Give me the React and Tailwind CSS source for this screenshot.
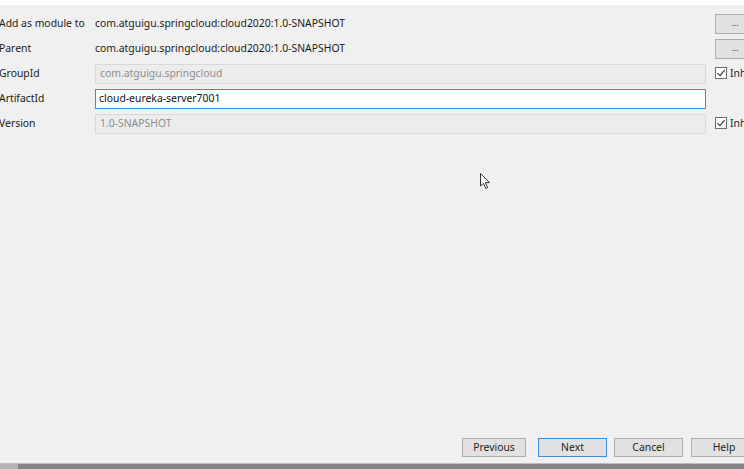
import React from "react";

const font = { fontFamily: '"Noto Sans", "Liberation Sans", sans-serif' };

function Check() {
  return (
    <div className="flex items-center gap-[3px]">
      <div className="w-[12px] h-[12px] border border-[#6d6d6d] bg-white flex items-center justify-center">
        <svg width="10" height="10" viewBox="0 0 10 10">
          <path d="M1.5 5.2 L4 7.6 L8.6 2.2" fill="none" stroke="#333" strokeWidth="1.1" />
        </svg>
      </div>
      <span className="text-[10.4px] text-[#222]">Inherit</span>
    </div>
  );
}

function DotsButton() {
  return (
    <div className="w-[40px] h-[20px] border border-[#adadad] bg-[#e1e1e1] flex items-center justify-center text-[9px] text-[#333] leading-none pb-[2px]">
      ...
    </div>
  );
}

export default function App() {
  const rows = [
    { label: "Add as module to", value: "com.atguigu.springcloud:cloud2020:1.0-SNAPSHOT", kind: "text", right: "dots" },
    { label: "Parent", value: "com.atguigu.springcloud:cloud2020:1.0-SNAPSHOT", kind: "text", right: "dots" },
    { label: "GroupId", value: "com.atguigu.springcloud", kind: "disabled", right: "check" },
    { label: "ArtifactId", value: "cloud-eureka-server7001", kind: "active", right: null },
    { label: "Version", value: "1.0-SNAPSHOT", kind: "disabled", right: "check" },
  ];

  const buttons = [
    { name: "Previous", cls: "w-[64px] border-[#adadad]" },
    { name: "Next", cls: "w-[69px] ml-[12px] border-[#3c8fd6]" },
    { name: "Cancel", cls: "w-[69px] ml-[7px] border-[#adadad]" },
    { name: "Help", cls: "w-[66px] ml-[8px] border-[#adadad]" },
  ];

  return (
    <div className="w-[744px] h-[469px] bg-[#f0f0f0] relative overflow-hidden flex flex-col" style={font}>
      <div className="h-[5px] bg-white" />

      {/* Form rows */}
      <div className="flex flex-col pt-[6px]">
        {rows.map((r) => (
          <div key={r.label} className="flex items-center h-[25px]">
            <div className="w-[96px] -ml-[1px] shrink-0 text-[10.4px] text-[#1a1a1a]">{r.label}</div>
            <div className="w-[611px] shrink-0">
              {r.kind === "text" && <div className="text-[10.4px] text-[#1a1a1a]">{r.value}</div>}
              {r.kind === "disabled" && (
                <div className="h-[20px] border border-[#d9d9d9] bg-[#ececec] px-[4px] flex items-center text-[10.4px] text-[#8c8c8c]">
                  {r.value}
                </div>
              )}
              {r.kind === "active" && (
                <div className="h-[20px] border border-[#3c8fd6] bg-white px-[3px] flex items-center text-[10.4px] text-[#111]">
                  {r.value}
                </div>
              )}
            </div>
            <div className="ml-[9px] shrink-0">
              {r.right === "dots" && <DotsButton />}
              {r.right === "check" && <Check />}
            </div>
          </div>
        ))}
      </div>

      <div className="flex-1" />

      {/* Bottom buttons */}
      <div className="flex items-center pl-[462px] pb-[6px]">
        {buttons.map((b) => (
          <div
            key={b.name}
            className={`h-[19px] shrink-0 flex items-center justify-center text-[10.4px] text-[#222] bg-[#e1e1e1] border ${b.cls}`}
          >
            {b.name}
          </div>
        ))}
      </div>

      <div className="h-[1px] bg-[#bdbdbd]" />
      <div className="h-[5px] flex">
        <div className="w-[18px] bg-[#b4b4b4]" />
        <div className="flex-1 bg-[#858585]" />
      </div>

      {/* mouse cursor */}
      <svg className="absolute left-[480px] top-[173px]" width="12" height="18" viewBox="0 0 12 18">
        <path d="M0.5 0.5 L0.5 13 L3.5 10.3 L5.8 15.5 L7.6 14.7 L5.4 9.6 L9.5 9.6 Z" fill="white" stroke="#333" strokeWidth="1" />
      </svg>
    </div>
  );
}
